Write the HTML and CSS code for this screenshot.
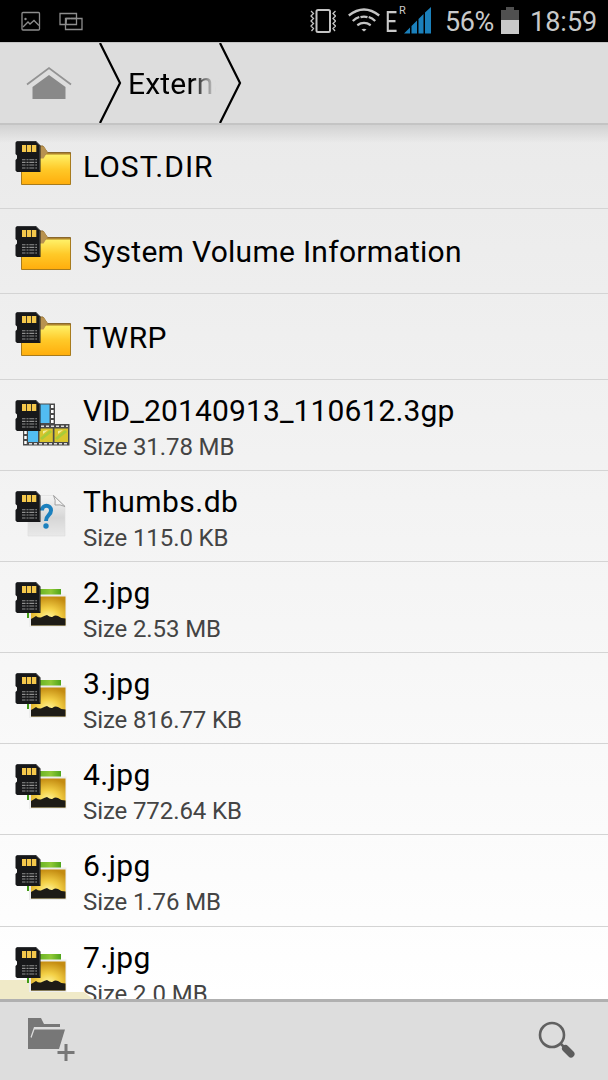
FILE: index.html
```html
<!DOCTYPE html>
<html lang="en">
<head>
  <meta charset="UTF-8" />
  <meta name="viewport" content="width=device-width, initial-scale=1.0"/>
  <title>File Manager</title>
  <link rel="stylesheet" href="styles.css">
</head>
<body>

  <!-- Shared icons -->
  <svg class="sprites" width="0" height="0">
    <defs>
      <linearGradient id="gold" x1="0" y1="0" x2="0" y2="1">
        <stop offset="0" stop-color="#fff36b"/>
        <stop offset="0.5" stop-color="#ffc928"/>
        <stop offset="1" stop-color="#ffad0c"/>
      </linearGradient>
      <linearGradient id="paper" x1="0" y1="0" x2="0" y2="1">
        <stop offset="0" stop-color="#f4f4f4"/>
        <stop offset="0.55" stop-color="#d6d6d6"/>
        <stop offset="1" stop-color="#e9e9e9"/>
      </linearGradient>
      <linearGradient id="green" x1="0" y1="0" x2="1" y2="0">
        <stop offset="0" stop-color="#3f9a12"/>
        <stop offset="0.7" stop-color="#8fc936"/>
        <stop offset="1" stop-color="#4fa41b"/>
      </linearGradient>
      <radialGradient id="sunset" cx="0.5" cy="0.75" r="0.75">
        <stop offset="0" stop-color="#fff7a0"/>
        <stop offset="0.45" stop-color="#f3cf45"/>
        <stop offset="1" stop-color="#c48c12"/>
      </radialGradient>

      <g id="card">
        <path d="M3 0h19l4.500 4.500V31H3l-1.500-1.500V19l1.500-1.500v-3l-1.500-1.500V1.500z" fill="#17181a"/>
        <path d="M3 .5h18.500l4 4v25" fill="none" stroke="#3e4043" stroke-width=".8"/>
        <path d="M8 4h4.200v7H8zM13 4h4.200v7H13zM18 4h4.300v7H18z" fill="#f5c84b"/>
        <path d="M8 18.800h15M8 21.400h15M8 24h15M8 27h15" stroke="#909090" stroke-width="1.100" stroke-dasharray="3.500 1 2 .8 5 1"/>
      </g>

      <symbol id="folder" viewBox="0 0 60 50">
        <path d="M24 5h5l4.500 6.500h23V16H24z" fill="#b98f43" stroke="#8a682c"/>
        <path d="M7.500 14.500h22l3-1.500h24v30.500h-49z" fill="url(#gold)" stroke="#a77b1e"/>
        <path d="M26 5.500h4l3.500 5.500-4 6.500H26z" fill="#b89250"/>
        <use href="#card"/>
      </symbol>

      <symbol id="video" viewBox="0 0 60 50">
        <path d="M17 3.500h24V25H17z" fill="#4a4a4a"/>
        <path d="M25 4.500h10.500V23H25z" fill="#52bdf2"/>
        <path d="M38.300 5v19" stroke="#fff" stroke-width="2.600" stroke-dasharray="3 2"/>
        <path d="M9 24h46.500v21.500H9z" fill="#4a4a4a"/>
        <path d="M14 28.500h10V42H14z" fill="#52bdf2"/>
        <path d="M25.500 28.500h13.300V42H25.500zM40.500 28.500H54V42H40.500z" fill="#d9c52d"/>
        <path d="M26 38l10-8 2 2-10 8zM41 38l10-8 2 2-10 8z" fill="#a8cb39"/>
        <path d="M29 31l5-1-5 4zM44 31l5-1-5 4z" fill="#f3ee9c"/>
        <path d="M11.500 31v13" stroke="#fff" stroke-width="2.500" stroke-dasharray="3 2"/>
        <path d="M15 43.700h39M27 26.300h27" stroke="#ddd" stroke-width="1.600" stroke-dasharray="3 2"/>
        <use href="#card"/>
      </symbol>

      <symbol id="unknown" viewBox="0 0 60 50">
        <path d="M14 4.500h26L51 15v30H14z" fill="url(#paper)" stroke="#dedede" stroke-width=".7"/>
        <path d="M39.500 4.500L51 15.500q-5-2.500-10-1.500 1-5-1.500-9.500z" fill="#f4f4f4" stroke="#999" stroke-width=".9"/>
        <path d="M28 19.500c0-6.500 9-6.500 9 0 0 5-5 4.500-5 10.500" fill="none" stroke="#1b80be" stroke-width="4"/>
        <circle cx="32" cy="35" r="2.700" fill="#1b80be"/>
        <use href="#card"/>
      </symbol>

      <symbol id="image" viewBox="0 0 60 50">
        <path d="M13 7h34v7l-31 22h-3z" fill="url(#green)"/>
        <path d="M15 12.500h37.500v32.500H15z" fill="#ededed"/>
        <path d="M17 14.500h34.500v29H17z" fill="url(#sunset)"/>
        <path d="M17 37q2-1 5-3 3 2.500 6 1t5-2q4 3 6 1.500t5-.5q3 2.500 7.500 2.500v7H17z" fill="#1d1b16"/>
        <use href="#card"/>
      </symbol>
    </defs>
  </svg>

  <!-- STATUS BAR -->
  <header class="status-bar">
    <svg class="notifications" width="90" height="42" viewBox="0 0 90 42">
      <g fill="none" stroke="#8d8d8d" stroke-width="1.300">
        <rect x="22" y="12.500" width="17.500" height="17.500" rx="1"/>
        <path d="M23 27l5-5 2 2 4-3.500 5 5"/>
        <path d="M66 24.500h-6V13.500h16.500v5"/>
        <path d="M71 18.500h11v11H65.500v-11h5"/>
        <path d="M66 24.500h10.500v-6h-10z"/>
      </g>
      <circle cx="25.500" cy="19" r="1.200" fill="#8d8d8d"/>
    </svg>

    <div class="status-right">
      <svg class="vibrate" width="26" height="26" viewBox="0 0 26 26" fill="none" stroke="#c4c4c4">
        <rect x="6.500" y="2" width="13.500" height="22" rx="1.500" stroke-width="2"/>
        <path d="M1 3l2.500 2.500L1 8l2.500 2.500L1 13l2.500 2.500L1 18l2.500 2.500L1.500 23M25.500 3L23 5.500 25.500 8 23 10.500l2.500 2.500-2.500 2.500 2.500 2.500-2.500 2.500 2 2.500" stroke-width="1.300"/>
      </svg>
      <svg class="wifi" width="32" height="26" viewBox="0 0 32 26" fill="none" stroke="#c4c4c4" stroke-width="2.300">
        <path d="M.8 8.500q15.200-12 30.400 0M4.800 14q3-3 6.500-4M27.200 14q-3-3-6.500-4M12.500 10.200q3.500-1 7 0M9.300 18.200q6.700-4.500 13.400 0"/>
        <path d="M13.500 22.500q2.500-1.500 5 0L16 24.500z" fill="#c4c4c4" stroke="none"/>
      </svg>
      <span class="edge">E</span>
      <span class="roaming">R</span>
      <svg class="signal" width="27" height="27" viewBox="0 0 27 27" fill="#1b80bb">
        <path d="M0 26.500l6-6v6zM7.500 26.500v-7.500l5.500-5.500v13zM14.500 26.500V12l5-5v19.500zM21 26.500V5.500L27 0v26.500z"/>
      </svg>
      <span class="percent">56%</span>
      <svg class="battery" width="18" height="27" viewBox="0 0 18 27">
        <path d="M5 0h8v3h5v11H0V3h5z" fill="#505050"/>
        <path d="M0 13h18v14H0z" fill="#c9c9c9"/>
      </svg>
      <span class="clock">18:59</span>
    </div>
  </header>

  <!-- PATH BAR -->
  <nav class="path-bar">
    <svg class="home" width="46" height="34" viewBox="0 0 46 34">
      <path d="M1 18.500L23 2l22 16.500" fill="none" stroke="#939393" stroke-width="1.800"/>
      <path d="M6.500 21L23 9l16.500 12v12h-33z" fill="#898989"/>
    </svg>
    <svg class="arrow" width="23" height="80" viewBox="0 0 23 80">
      <path d="M1 0l20 40L1 80" fill="none" stroke="#000" stroke-width="2.200"/>
    </svg>
    <span class="crumb">External</span>
    <svg class="arrow" width="23" height="80" viewBox="0 0 23 80">
      <path d="M1 0l20 40L1 80" fill="none" stroke="#000" stroke-width="2.200"/>
    </svg>
  </nav>

  <!-- FILE LIST -->
  <main class="file-list">
    <div class="row folder-row">
      <svg class="icon"><use href="#folder"/></svg>
      <div class="info"><div class="name n-lost">LOST.DIR</div></div>
    </div>
    <div class="row folder-row">
      <svg class="icon"><use href="#folder"/></svg>
      <div class="info"><div class="name n-system">System Volume Information</div></div>
    </div>
    <div class="row folder-row">
      <svg class="icon"><use href="#folder"/></svg>
      <div class="info"><div class="name n-twrp">TWRP</div></div>
    </div>
    <div class="row">
      <svg class="icon"><use href="#video"/></svg>
      <div class="info"><div class="name n-video">VID_20140913_110612.3gp</div><div class="size">Size 31.78 MB</div></div>
    </div>
    <div class="row">
      <svg class="icon"><use href="#unknown"/></svg>
      <div class="info"><div class="name">Thumbs.db</div><div class="size">Size 115.0 KB</div></div>
    </div>
    <div class="row">
      <svg class="icon"><use href="#image"/></svg>
      <div class="info"><div class="name">2.jpg</div><div class="size">Size 2.53 MB</div></div>
    </div>
    <div class="row">
      <svg class="icon"><use href="#image"/></svg>
      <div class="info"><div class="name">3.jpg</div><div class="size">Size 816.77 KB</div></div>
    </div>
    <div class="row">
      <svg class="icon"><use href="#image"/></svg>
      <div class="info"><div class="name">4.jpg</div><div class="size">Size 772.64 KB</div></div>
    </div>
    <div class="row">
      <svg class="icon"><use href="#image"/></svg>
      <div class="info"><div class="name">6.jpg</div><div class="size">Size 1.76 MB</div></div>
    </div>
    <div class="row last">
      <svg class="icon"><use href="#image"/></svg>
      <div class="info"><div class="name">7.jpg</div><div class="size">Size 2.0 MB</div></div>
    </div>
    <div class="glow"></div>
  </main>

  <!-- BOTTOM BAR -->
  <footer class="bottom-bar">
    <svg class="new-folder" width="48" height="46" viewBox="0 0 48 46">
      <path d="M1 1h13l3 6h16v3H7L3.500 20l1 1 3-8.500H38l-6 19.500H1z" fill="#777"/>
      <path d="M30.500 35.500h17M39 27v17" stroke="#777" stroke-width="3"/>
    </svg>
    <svg class="search" width="38" height="38" viewBox="0 0 38 38">
      <circle cx="14" cy="14" r="12" fill="none" stroke="#606060" stroke-width="2.600"/>
      <path d="M22 22l5 5" stroke="#606060" stroke-width="2.500"/>
      <path d="M27.500 27.500l5.500 5.500" stroke="#5c5c5c" stroke-width="7" stroke-linecap="round"/>
    </svg>
  </footer>

</body>
</html>
```
FILE: styles.css
```css
* {
  box-sizing: border-box;
}

body {
  margin: 0;
  height: 1080px;
  display: flex;
  flex-direction: column;
  overflow: hidden;
  font-family: Roboto, sans-serif;
  color: #000;
  background-color: #ddd;
}

svg {
  display: block;
  flex-shrink: 0;
}

.sprites {
  position: absolute;
}

/* status bar */
.status-bar {
  height: 42px;
  flex-shrink: 0;
  background-color: #000;
  color: #c9c9c9;
  display: flex;
  justify-content: space-between;
}

.status-right {
  display: flex;
  align-items: flex-start;
  padding-right: 12px;
  padding-top: 7px;
  line-height: 28px;
}

.vibrate {
  margin: 1px 12px 0 0;
}

.wifi {
  margin-right: 5px;
}

.edge {
  width: 14px;
  font-size: 30px;
  line-height: 29px;
  transform: scaleX(0.72);
  transform-origin: left;
}

.roaming {
  width: 5px;
  font-size: 11px;
  line-height: 8px;
}

.signal {
  margin-right: 14px;
}

.percent {
  width: 49px;
  font-size: 27px;
  line-height: 31px;
  letter-spacing: -0.4px;
  white-space: nowrap;
}

.battery {
  margin: 0 11px 0 7px;
}

.clock {
  width: 66px;
  font-size: 27px;
  line-height: 31px;
}

/* path bar */
.path-bar {
  height: 83px;
  flex-shrink: 0;
  display: flex;
  align-items: flex-start;
  background-color: #ddd;
  border-top: 1px solid #c4c4c4;
  border-bottom: 2px solid #c4c4c4;
}

.home {
  margin: 23px 27px 0 26px;
}

.crumb {
  width: 91px;
  margin-left: 6px;
  padding-top: 23px;
  font-size: 30px;
  line-height: 36px;
  letter-spacing: 0.2px;
  overflow: hidden;
  color: transparent;
  background: linear-gradient(to right, #000 64px, #ddd 88px);
  -webkit-background-clip: text;
  background-clip: text;
}

/* file list */
.file-list {
  height: 874px;
  flex-shrink: 0;
  position: relative;
  overflow: hidden;
  background: linear-gradient(to bottom, #d2d2d2 0, rgba(221, 221, 221, 0) 18px), linear-gradient(to bottom, #eaeaea, #fff);
}

.row {
  height: 91.150px;
  display: flex;
  align-items: center;
  border-bottom: 1px solid #d4d4d4;
  position: relative;
}

.folder-row {
  height: 85.350px;
}

.folder-row:first-child {
  height: 84px;
  padding-bottom: 1px;
}

.row.last {
  border-bottom: none;
}

.icon {
  width: 60px;
  height: 50px;
  margin: 0 9px 0 14px;
  position: relative;
  z-index: 1;
}

.info {
  padding-top: 4px;
  white-space: nowrap;
}

.folder-row .info {
  padding-top: 1px;
}

.name {
  font-size: 30px;
  line-height: 35px;
  letter-spacing: 0.45px;
}

.n-lost {
  letter-spacing: 1px;
}

.n-system {
  letter-spacing: 0.28px;
}

.n-video {
  letter-spacing: 0.13px;
}

.size {
  margin-top: 5px;
  font-size: 24px;
  line-height: 28px;
  letter-spacing: -0.1px;
  color: #444;
}

.glow {
  position: absolute;
  left: 0;
  bottom: 0;
  width: 93px;
  height: 19px;
  background-color: #f0eac8;
  clip-path: polygon(0 0, 28px 0, 32px 12px, 84px 12px, 93px 19px, 0 19px);
}

/* bottom bar */
.bottom-bar {
  height: 81px;
  flex-shrink: 0;
  display: flex;
  justify-content: space-between;
  align-items: flex-start;
  border-top: 3px solid #b0b0b0;
  background-color: #ddd;
}

.new-folder {
  margin: 15px 0 0 27px;
}

.search {
  margin: 19px 32px 0 0;
}
```
